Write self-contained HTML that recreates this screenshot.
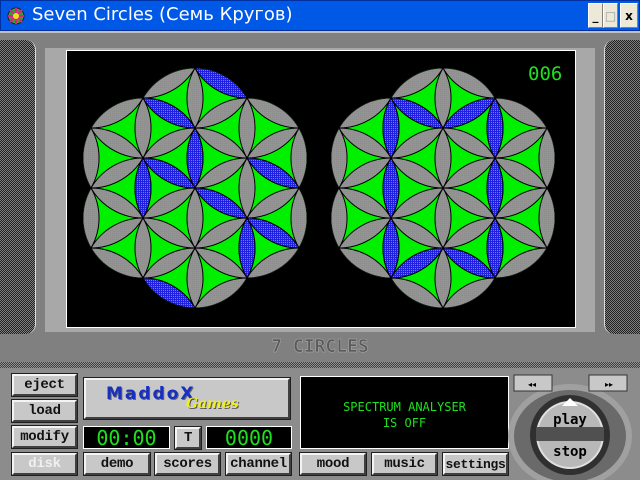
<!DOCTYPE html>
<html><head><meta charset="utf-8"><style>
*{margin:0;padding:0;box-sizing:border-box}
body{width:640px;height:480px;overflow:hidden;background:#808080;position:relative;font-family:"DejaVu Sans","Liberation Sans",sans-serif}
.a{position:absolute}
.tb{left:0;top:0;width:640px;height:31px;background:#0058e6;border:1px solid #0030a0}
.tt{left:32px;top:4px;color:#fff;font-size:18px;font-family:"DejaVu Sans",sans-serif}
.wb{top:3px;width:15px;height:25px;background:#ece9d8;border:1px solid #fff;border-right-color:#808080;border-bottom-color:#808080;font-size:12px;font-weight:bold;text-align:center;line-height:25px;color:#000}
.btn{background:#c8c8c8;border:2px solid;border-color:#f4f4f4 #404040 #404040 #f4f4f4;outline:1px solid #202020;font-family:"Liberation Mono","DejaVu Sans Mono",monospace;font-weight:bold;font-size:14px;text-align:center;color:#111;line-height:19px;letter-spacing:-0.3px}
.lcd{background:#000;border:1px solid #fff;color:#1ee01e;font-family:"DejaVu Sans Mono",monospace;font-size:20px;text-align:center;line-height:22px}
</style></head><body>
<div class="a tb"></div>
<svg class="a" style="left:6px;top:6px" width="20" height="20"><circle cx="10" cy="10" r="8" fill="#3a9a3a" stroke="#222"/><path d="M10 2L10 18M2 10L18 10M4 4L16 16M16 4L4 16" stroke="#e02080" stroke-width="2"/><circle cx="10" cy="10" r="3" fill="#f0e020"/></svg>
<div class="a tt">Seven Circles (Семь Кругов)</div>
<div class="a wb" style="left:588px">_</div><div class="a wb" style="left:603px;color:#999">□</div><div class="a wb" style="left:620px;width:18px">x</div>
<div class="a" style="left:0;top:31px;width:640px;height:2px;background:#c0c0c0"></div>
<div class="a" style="left:0;top:40px;width:36px;height:294px;background:repeating-conic-gradient(#202020 0 25%,#808080 0 50%) 0 0/2px 2px;border-radius:0 10px 10px 0;border-right:1px solid #ddd"></div>
<div class="a" style="left:604px;top:40px;width:36px;height:294px;background:repeating-conic-gradient(#202020 0 25%,#808080 0 50%) 0 0/2px 2px;border-radius:10px 0 0 10px;border-left:1px solid #ddd"></div>
<div class="a" style="left:45px;top:48px;width:550px;height:284px;background:#a8a8a8"></div>
<div class="a" style="left:66px;top:50px;width:510px;height:278px;background:#000;border:1px solid #fff"></div>
<svg class="a" style="left:0;top:0" width="640" height="362">
<defs>
<pattern id="g" width="2" height="2" patternUnits="userSpaceOnUse"><rect width="2" height="2" fill="#909090"/><rect width="1" height="1" fill="#30e030"/></pattern>
<pattern id="b" width="2" height="2" patternUnits="userSpaceOnUse"><rect width="2" height="2" fill="#2020e0"/><rect width="1" height="1" fill="#8080a0"/></pattern>
</defs>
<g id="L" transform="translate(195,188)"></g>
<g id="R" transform="translate(443,188)"></g>
<text x="528" y="80" fill="#1ee01e" font-family="DejaVu Sans Mono,monospace" font-size="19">006</text>
<text x="320" y="352" fill="#5a5a5a" font-family="DejaVu Sans Mono,monospace" font-weight="bold" font-size="18" text-anchor="middle" stroke="#b0b0b0" stroke-width="0.5">7 CIRCLES</text>
</svg>
<div class="a" style="left:0;top:362px;width:640px;height:6px;background:repeating-conic-gradient(#404040 0 25%,#909090 0 50%) 0 0/2px 2px"></div>
<div class="a" style="left:0;top:368px;width:640px;height:112px;background:#8c8c8c"></div>
<div class="a btn" style="left:12px;top:374px;width:65px;height:22px">eject</div>
<div class="a btn" style="left:12px;top:400px;width:65px;height:22px">load</div>
<div class="a btn" style="left:12px;top:426px;width:65px;height:22px">modify</div>
<div class="a btn" style="left:12px;top:453px;width:65px;height:22px;color:#f0f0f0">disk</div>
<div class="a btn" style="left:84px;top:378px;width:206px;height:41px"></div>
<div class="a" style="left:106px;top:384px;font-family:'DejaVu Sans',sans-serif;font-weight:bold;font-size:17px;color:#1830c0;letter-spacing:2px;text-shadow:1px 1px #666">MaddoX</div>
<div class="a" style="left:186px;top:396px;font-family:'DejaVu Serif',serif;font-style:italic;font-weight:bold;font-size:14px;color:#f0f020;text-shadow:1px 1px #555">Games</div>
<div class="a lcd" style="left:83px;top:426px;width:87px;height:23px">00:00</div>
<div class="a btn" style="left:175px;top:427px;width:26px;height:22px">T</div>
<div class="a lcd" style="left:206px;top:426px;width:86px;height:23px">0000</div>
<div class="a btn" style="left:84px;top:453px;width:66px;height:22px">demo</div>
<div class="a btn" style="left:155px;top:453px;width:65px;height:22px">scores</div>
<div class="a btn" style="left:226px;top:453px;width:65px;height:22px">channel</div>
<div class="a" style="left:300px;top:376px;width:209px;height:73px;background:#000;border:1px solid #fff;color:#1ee01e;font-family:'DejaVu Sans Mono',monospace;font-size:12px;text-align:center;padding-top:22px;line-height:16px">SPECTRUM ANALYSER<br>IS OFF</div>
<div class="a btn" style="left:300px;top:453px;width:66px;height:22px">mood</div>
<div class="a btn" style="left:372px;top:453px;width:65px;height:22px">music</div>
<div class="a btn" style="left:443px;top:453px;width:65px;height:22px;font-size:13px">settings</div>
<svg class="a" style="left:500px;top:368px" width="140" height="112">
<ellipse cx="70" cy="68" rx="62" ry="52" fill="#a0a0a0"/>
<ellipse cx="70" cy="68" rx="56" ry="46" fill="#6a6a6a"/>
<circle cx="70" cy="67" r="40" fill="#303030"/>
<circle cx="70" cy="67" r="34" fill="#e0e0e0"/>
<circle cx="70" cy="67" r="32" fill="#b8b8b8"/>
<rect x="36" y="59" width="68" height="14" fill="#505050"/>
<path d="M62 38L70 30L78 38Z" fill="#fff"/>
<text x="70" y="56" text-anchor="middle" font-family="DejaVu Sans Mono,monospace" font-weight="bold" font-size="14">play</text>
<text x="70" y="88" text-anchor="middle" font-family="DejaVu Sans Mono,monospace" font-weight="bold" font-size="14">stop</text>
<rect x="14" y="7" width="38" height="16" fill="#c8c8c8" stroke="#333"/>
<text x="28" y="19" font-size="8" font-weight="bold">◂◂</text>
<rect x="89" y="7" width="38" height="16" fill="#c8c8c8" stroke="#333"/>
<text x="105" y="19" font-size="8" font-weight="bold">▸▸</text>
</svg>
<script>
function P(i,j){return [j*52, i*60+j*30];}
var pts=[];
for(var i=-4;i<=4;i++)for(var j=-3;j<=3;j++){var p=P(i,j);if(Math.hypot(p[0],p[1])<130)pts.push(p);}
function lens(a,b,fill){return '<path d="M'+a[0]+' '+a[1]+'A60 60 0 0 1 '+b[0]+' '+b[1]+'A60 60 0 0 1 '+a[0]+' '+a[1]+'Z" fill="'+fill+'"/>';}
var all="";
pts.forEach(function(p){[[0,60],[52,30],[52,-30]].forEach(function(d){all+=lens(p,[p[0]+d[0],p[1]+d[1]],"url(#g)");});});
function fig(id,blues){
 var s='<clipPath id="c'+id+'">';
 [[0,0],[0,-60],[0,60],[52,-30],[52,30],[-52,-30],[-52,30]].forEach(function(c){s+='<circle cx="'+c[0]+'" cy="'+c[1]+'" r="60"/>';});
 s+='</clipPath><g clip-path="url(#c'+id+')"><rect x="-130" y="-130" width="260" height="260" fill="#00f000"/><g stroke="#000" stroke-width="1">'+all;
 blues.forEach(function(b){s+=lens(b[0],b[1],"url(#b)");});
 s+='</g></g>';
 document.getElementById(id).innerHTML=s;
}
fig("L",[[[0,-120],[52,-90]],[[-52,-90],[0,-60]],[[0,-60],[0,0]],[[-52,-30],[0,0]],[[-52,-30],[-52,30]],[[0,0],[52,30]],[[52,-30],[104,0]],[[52,30],[104,60]],[[52,30],[52,90]],[[-52,90],[0,120]]]);
fig("R",[[[-52,-90],[0,-60]],[[0,-60],[52,-90]],[[-52,-90],[-52,-30]],[[52,-90],[52,-30]],[[-52,-30],[-52,30]],[[52,-30],[52,30]],[[-52,30],[-52,90]],[[52,30],[52,90]],[[-52,90],[0,60]],[[0,60],[52,90]]]);
</script>
</body></html>
